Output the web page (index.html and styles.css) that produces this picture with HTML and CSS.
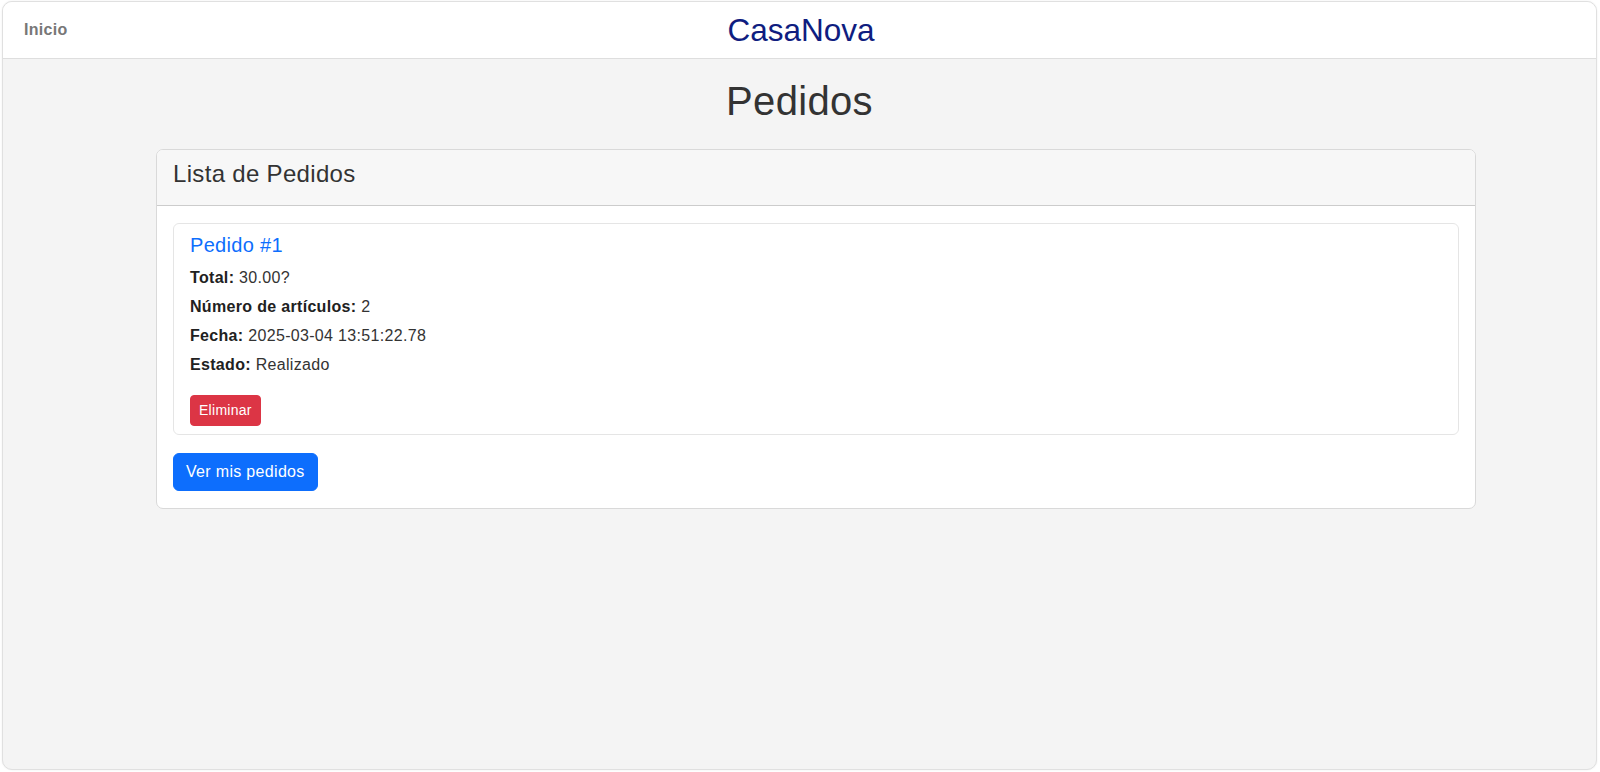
FILE: index.html
```html
<!DOCTYPE html>
<html lang="es">
<head>
<meta charset="utf-8">
<title>CasaNova - Pedidos</title>
<link rel="stylesheet" href="styles.css">
</head>
<body>
<div class="frame">
  <nav class="navbar">
    <a class="nav-link" href="#">Inicio</a>
    <span class="brand">CasaNova</span>
    <span></span>
  </nav>
  <main class="main">
    <h1 class="page-title">Pedidos</h1>
    <section class="card">
      <header class="card-header">
        <h4 class="card-header-title">Lista de Pedidos</h4>
      </header>
      <div class="card-body">
        <article class="order">
          <h5 class="order-title">Pedido #1</h5>
          <p class="order-line"><strong>Total:</strong> 30.00?</p>
          <p class="order-line"><strong>Número de artículos:</strong> 2</p>
          <p class="order-line"><strong>Fecha:</strong> 2025-03-04 13:51:22.78</p>
          <p class="order-line"><strong>Estado:</strong> Realizado</p>
          <button class="btn btn-danger">Eliminar</button>
        </article>
        <button class="btn btn-primary">Ver mis pedidos</button>
      </div>
    </section>
  </main>
</div>
</body>
</html>
```

FILE: styles.css
```css
html, body {
  margin: 0;
  padding: 0;
  background: #ffffff;
  font-family: "Liberation Sans", Arial, sans-serif;
}

body {
  padding: 1px 3px 2px 2px;
  height: 772px;
  box-sizing: border-box;
  overflow: hidden;
  letter-spacing: 0.02em;
}

.frame {
  height: 769px;
  box-sizing: border-box;
  border: 1px solid #e0e0e0;
  border-radius: 10px;
  background: #f4f4f4;
  overflow: hidden;
  box-shadow: 0 0 2px rgba(0, 0, 0, 0.08);
}

.navbar {
  height: 56px;
  background: #ffffff;
  border-bottom: 1px solid #dedede;
  display: grid;
  grid-template-columns: 1fr auto 1fr;
  align-items: center;
  padding: 0 21px;
}

.nav-link {
  font-size: 16px;
  font-weight: bold;
  color: #777777;
  text-decoration: none;
  justify-self: start;
  margin-top: -1px;
}

.brand {
  font-size: 31.5px;
  letter-spacing: 0;
  color: #0f1d80;
  margin-top: 1px;
  margin-left: 3px;
}

.main {
  padding-top: 18px;
}

.page-title {
  margin: 0 0 24px;
  font-size: 40px;
  font-weight: normal;
  line-height: 1.2;
  text-align: center;
  color: #333333;
}

.card {
  width: 1320px;
  box-sizing: border-box;
  margin-left: 153px;
  background: #ffffff;
  border: 1px solid #d9d9d9;
  border-radius: 7px;
  overflow: hidden;
}

.card-header {
  background: #f7f7f7;
  border-bottom: 1px solid #cccccc;
  padding: 10px 16px 8px;
}

.card-header-title {
  margin: 0 0 8px;
  font-size: 24px;
  font-weight: normal;
  line-height: 1.2;
  color: #333333;
}

.card-body {
  padding: 17px 16px 17px;
  display: flex;
  flex-direction: column;
  align-items: flex-start;
  gap: 18px;
}

.order {
  align-self: stretch;
  border: 1px solid #e5e5e5;
  border-radius: 6px;
  padding: 9px 16px 8px;
  display: flex;
  flex-direction: column;
  align-items: flex-start;
}

.order-title {
  margin: 0 0 9px;
  font-size: 20px;
  font-weight: normal;
  line-height: 1.2;
  color: #0d6efd;
}

.order-line {
  margin: 0 0 5px;
  font-size: 16px;
  line-height: 24px;
  color: #333333;
}

.order-line strong {
  color: #212121;
}

.btn {
  font-family: "Liberation Sans", Arial, sans-serif;
  letter-spacing: 0.02em;
  border: 1px solid transparent;
  color: #ffffff;
  cursor: pointer;
}

.btn-danger {
  margin-top: 13px;
  background: #dc3545;
  border-color: #dc3545;
  font-size: 14px;
  line-height: 21px;
  padding: 4px 8px;
  border-radius: 4px;
}

.btn-primary {
  background: #0d6efd;
  border-color: #0d6efd;
  font-size: 16px;
  line-height: 24px;
  padding: 6px 12px;
  border-radius: 6px;
}
```
